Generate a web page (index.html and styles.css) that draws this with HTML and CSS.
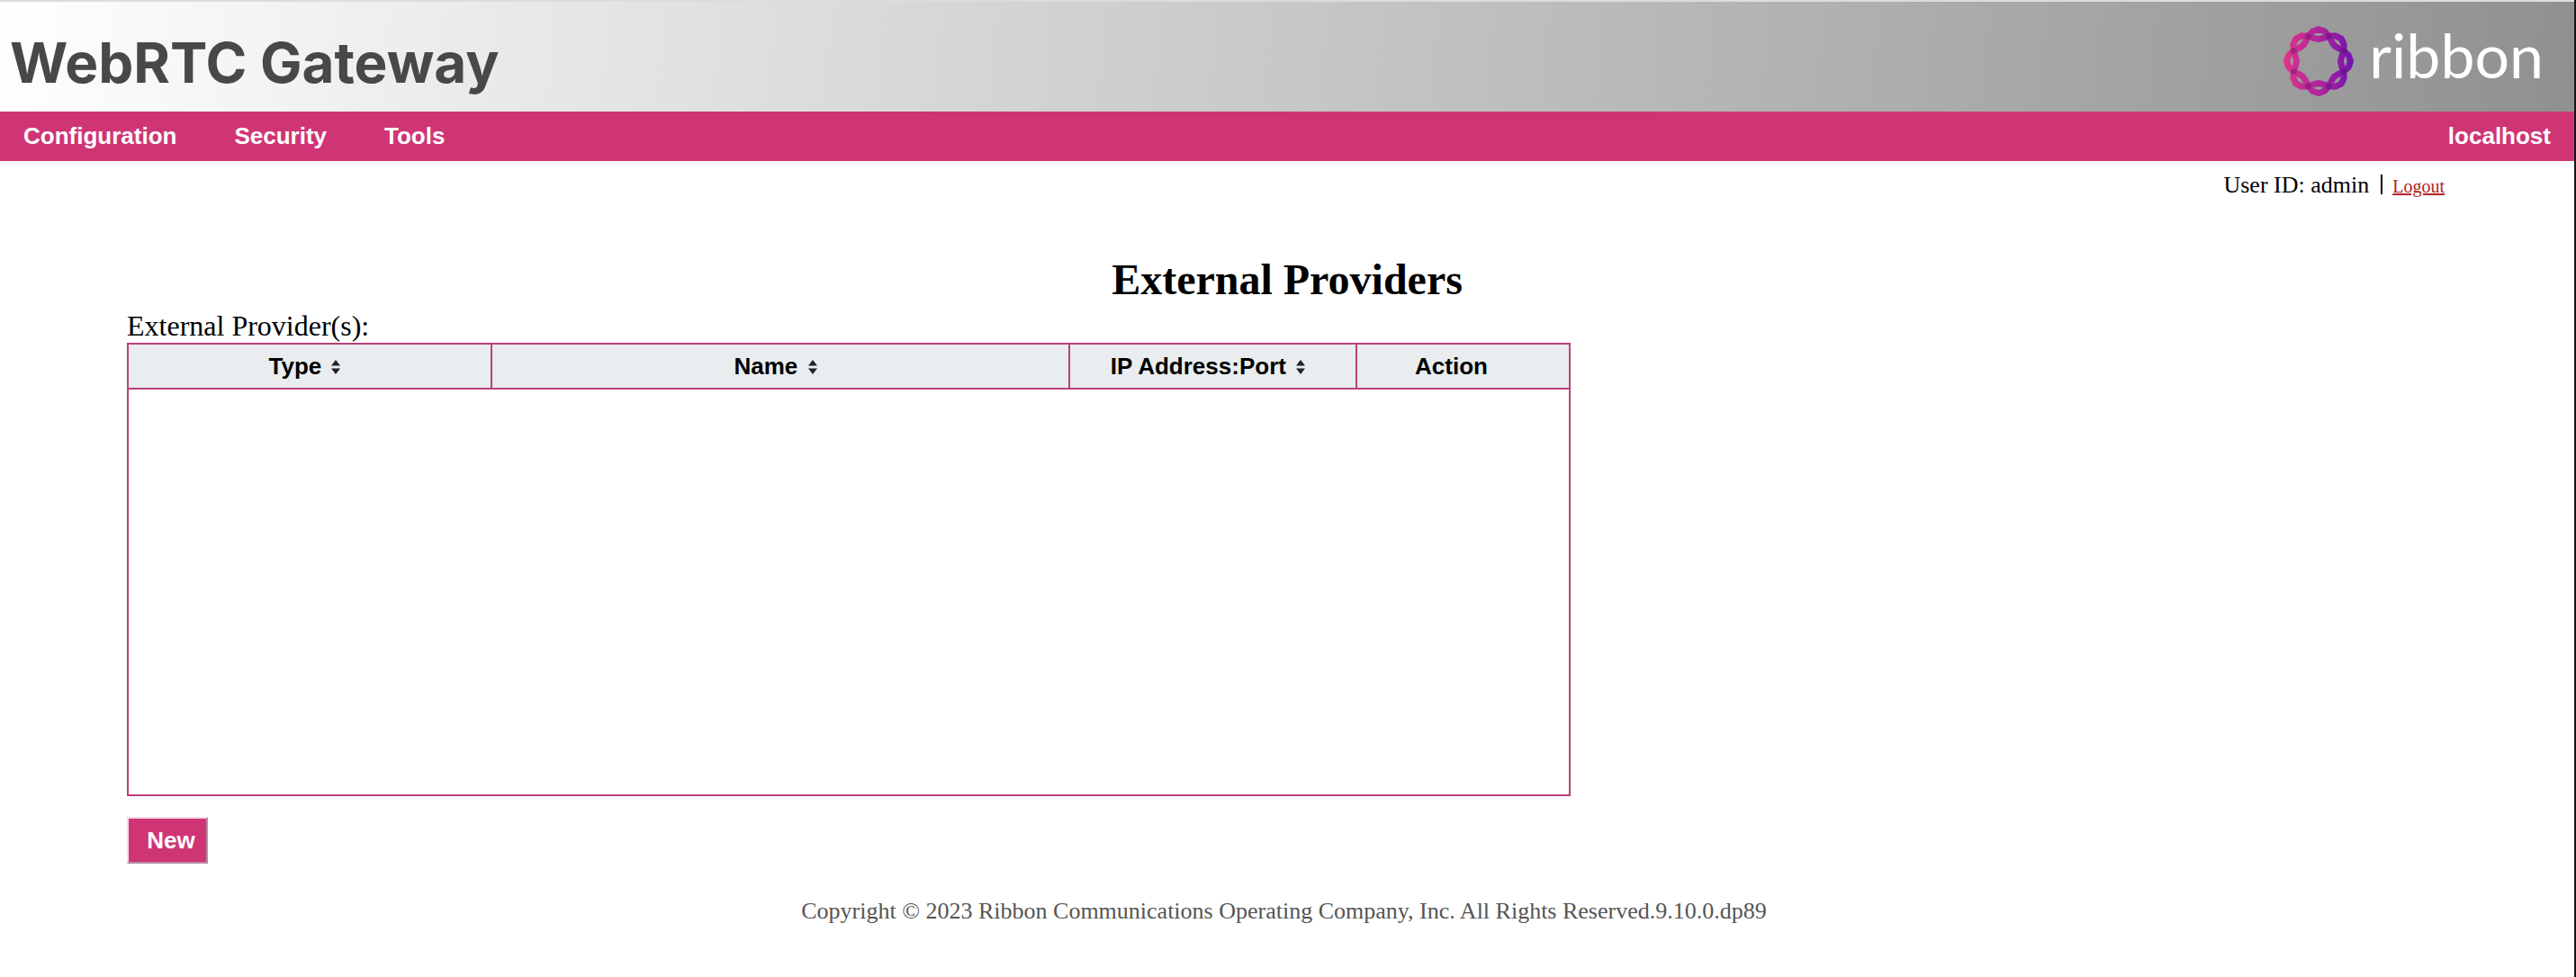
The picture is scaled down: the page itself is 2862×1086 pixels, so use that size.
FILE: index.html
```html
<!doctype html>
<html lang="en">

<head>
    <meta charset="utf-8" />
    <title>WebRTC Gateway</title>
    <link rel="stylesheet" href="styles.css">
</head>

<body>
    <header class="banner">
        <div class="product">WebRTC Gateway</div>
        <div class="brand">
            <svg class="ring" width="84" height="84" viewBox="-42 -42 84 84">
                <defs>
                    <linearGradient id="ringFill" gradientUnits="userSpaceOnUse" x1="-40" y1="0" x2="40" y2="0">
                        <stop offset="0" stop-color="#e2338a" />
                        <stop offset="0.5" stop-color="#b0269c" />
                        <stop offset="1" stop-color="#6f12b0" />
                    </linearGradient>
                </defs>
                <polygon class="strand" points="35.5,0 33.24,6.61 27.72,11.48 21.71,14.51 17.32,17.32 14.51,21.71 11.48,27.72 6.61,33.24 0,35.5 -6.61,33.24 -11.48,27.72 -14.51,21.71 -17.32,17.32 -21.71,14.51 -27.72,11.48 -33.24,6.61 -35.5,0 -33.24,-6.61 -27.72,-11.48 -21.71,-14.51 -17.32,-17.32 -14.51,-21.71 -11.48,-27.72 -6.61,-33.24 0,-35.5 6.61,-33.24 11.48,-27.72 14.51,-21.71 17.32,-17.32 21.71,-14.51 27.72,-11.48 33.24,-6.61" />
                <polygon class="strand" points="24.5,0 25.61,5.09 27.72,11.48 28.18,18.83 25.1,25.1 18.83,28.18 11.48,27.72 5.09,25.61 0,24.5 -5.09,25.61 -11.48,27.72 -18.83,28.18 -25.1,25.1 -28.18,18.83 -27.72,11.48 -25.61,5.09 -24.5,0 -25.61,-5.09 -27.72,-11.48 -28.18,-18.83 -25.1,-25.1 -18.83,-28.18 -11.48,-27.72 -5.09,-25.61 0,-24.5 5.09,-25.61 11.48,-27.72 18.83,-28.18 25.1,-25.1 28.18,-18.83 27.72,-11.48 25.61,-5.09" />
                <g class="knots">
                    <circle cx="27.72" cy="11.48" r="3.5" />
                    <circle cx="11.48" cy="27.72" r="3.5" />
                    <circle cx="-11.48" cy="27.72" r="3.5" />
                    <circle cx="-27.72" cy="11.48" r="3.5" />
                    <circle cx="-27.72" cy="-11.48" r="3.5" />
                    <circle cx="-11.48" cy="-27.72" r="3.5" />
                    <circle cx="11.48" cy="-27.72" r="3.5" />
                    <circle cx="27.72" cy="-11.48" r="3.5" />
                </g>
            </svg>
            <span class="wordmark">ribbon</span>
        </div>
    </header>

    <nav class="menu">
        <div class="menu-links">
            <a href="#">Configuration</a>
            <a href="#">Security</a>
            <a href="#">Tools</a>
        </div>
        <div class="host">localhost</div>
    </nav>

    <div class="user-bar">
        <span>User ID: admin</span>
        <span class="sep"></span>
        <a class="logout" href="#">Logout</a>
    </div>

    <main>
        <h2 class="page-title">External Providers</h2>

        <section class="providers">
            <div class="table-label">External Provider(s):</div>
            <table class="list">
                <thead>
                    <tr>
                        <th class="col-type">Type <svg class="sort" width="10" height="16" viewBox="0 0 10 16"><path d="M5 0 10 6.500H0ZM5 16 0 9.500H10Z" /></svg></th>
                        <th class="col-name">Name <svg class="sort" width="10" height="16" viewBox="0 0 10 16"><path d="M5 0 10 6.500H0ZM5 16 0 9.500H10Z" /></svg></th>
                        <th class="col-addr">IP Address:Port <svg class="sort" width="10" height="16" viewBox="0 0 10 16"><path d="M5 0 10 6.500H0ZM5 16 0 9.500H10Z" /></svg></th>
                        <th class="col-action">Action</th>
                    </tr>
                </thead>
                <tbody>
                    <tr class="empty">
                        <td colspan="4"></td>
                    </tr>
                </tbody>
            </table>
            <button class="new-btn">New</button>
        </section>

        <footer class="copyright">Copyright © 2023 Ribbon Communications Operating Company, Inc. All Rights Reserved.9.10.0.dp89</footer>
    </main>
</body>

</html>
```

FILE: styles.css
```css
html {
    background-color: #161616;
}

body {
    margin: 0;
    width: 2860px;
    min-height: 1086px;
    font-family: "Liberation Serif", serif;
    color: #000;
    background-color: #fff;
}

.banner {
    height: 122px;
    border-top: 2px solid #dcdcdc;
    background: linear-gradient(95deg, #fff 0%, #909090 100%);
    display: flex;
    justify-content: space-between;
    align-items: flex-start;
}

.product {
    margin: 32px 0 0 11px;
    font-family: Inter, sans-serif;
    font-size: 62px;
    font-weight: 700;
    line-height: 72px;
    color: #484848;
}

.brand {
    display: flex;
    align-items: flex-start;
    margin: 24px 34px 0 0;
}

.ring {
    margin-right: 14px;
}

.strand {
    fill: none;
    stroke: url(#ringFill);
    stroke-width: 7;
    stroke-linejoin: round;
}

.knots {
    fill: #3c0a50;
    fill-opacity: 0.3;
}

.wordmark {
    font-family: Lato, sans-serif;
    font-size: 68px;
    font-weight: 400;
    line-height: 70px;
    color: #fff;
}

.menu {
    height: 55px;
    background-color: #cf3575;
    display: flex;
    justify-content: space-between;
    align-items: center;
    padding: 0 26px;
    font-family: "Liberation Sans", sans-serif;
    font-size: 26px;
    font-weight: 700;
    color: #fff;
}

.menu-links {
    display: flex;
    gap: 64px;
}

.menu-links a {
    color: #fff;
    text-decoration: none;
}

.user-bar {
    display: flex;
    justify-content: flex-end;
    align-items: center;
    height: 46px;
    padding-top: 4px;
    padding-right: 144px;
    font-size: 26px;
}

.sep {
    width: 2px;
    height: 22px;
    margin: -2px 11px 0 13px;
    background-color: #000;
}

.logout {
    margin-top: 2px;
    font-size: 20px;
    color: #b22222;
}

.page-title {
    margin: 50px 0 0;
    text-align: center;
    font-size: 48px;
    line-height: 64px;
}

.providers {
    margin: 0 0 0 141px;
    width: 1604px;
}

.table-label {
    font-size: 32px;
    line-height: 38px;
}

.list {
    width: 1604px;
    table-layout: fixed;
    border-collapse: collapse;
    border: 2px solid #b8417a;
}

.list th {
    height: 48px;
    padding: 0 11px 0 0;
    background-color: #e9edef;
    border: 2px solid #b8417a;
    font-family: "Liberation Sans", sans-serif;
    font-size: 26px;
    font-weight: 700;
}

.list th.col-action {
    padding-right: 26px;
}

.col-type {
    width: 391px;
}

.col-name {
    width: 629px;
}

.col-addr {
    width: 306px;
}

.sort {
    margin-left: 4px;
    fill: #222;
}

.empty td {
    height: 450px;
    padding: 0;
}

.new-btn {
    display: block;
    width: 90px;
    height: 52px;
    margin: 23px 0 0;
    padding: 0 0 0 8px;
    border: 2px solid;
    border-color: #f7d9e6 #b58ca0 #b58ca0 #f7d9e6;
    background-color: #cf3575;
    font-family: "Liberation Sans", sans-serif;
    font-size: 26px;
    font-weight: 700;
    color: #fff;
}

.copyright {
    margin-top: 37px;
    padding-right: 7px;
    text-align: center;
    font-size: 26px;
    line-height: 32px;
    color: #555;
}
```
